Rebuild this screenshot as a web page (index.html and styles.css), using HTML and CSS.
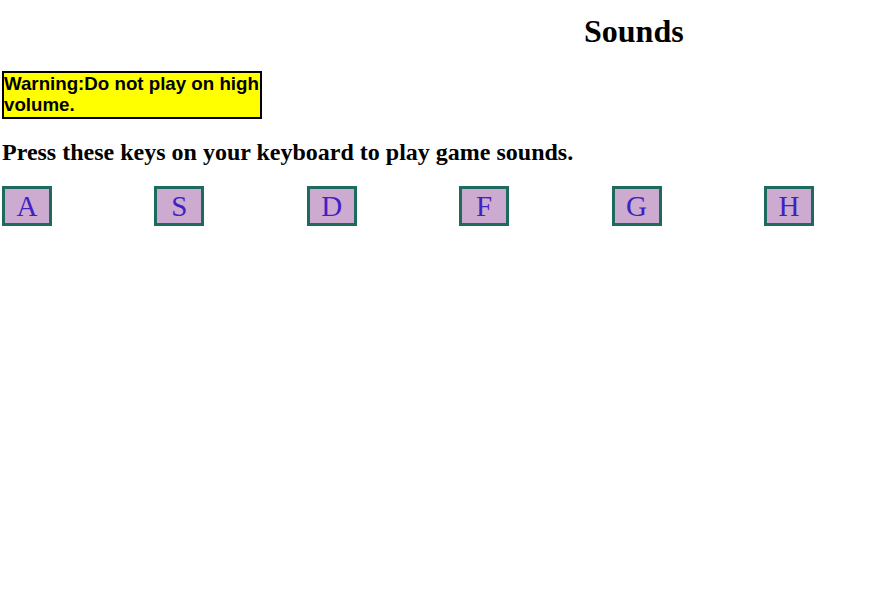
FILE: index.html
```html
<!DOCTYPE html>
<html>
<head>
<meta charset="utf-8">
<link rel="stylesheet" href="styles.css">
</head>
<body>
<h1 class="title">Sounds</h1>
<div class="warning">Warning:Do not play on high volume.</div>
<h2 class="intro">Press these keys on your keyboard to play game sounds.</h2>
<div class="keys">
  <div class="slot"><div class="key">A</div></div>
  <div class="slot"><div class="key">S</div></div>
  <div class="slot"><div class="key">D</div></div>
  <div class="slot"><div class="key">F</div></div>
  <div class="slot"><div class="key">G</div></div>
  <div class="slot"><div class="key">H</div></div>
</div>
</body>
</html>
```
FILE: styles.css
```css
html, body {
  margin: 0;
  padding: 0;
  background: #fff;
}
body {
  font-family: "Liberation Serif", "Times New Roman", serif;
  color: #000;
  padding-left: 2px;
}
.title {
  font-size: 32px;
  font-weight: bold;
  margin: 13px 0 0 0;
  padding-left: 582px;
  line-height: 37px;
}
.warning {
  font-family: "Liberation Sans", Arial, sans-serif;
  font-weight: bold;
  font-size: 18.72px;
  line-height: 21px;
  width: 256px;
  padding: 0 0 2px 0;
  border: 2px solid #000;
  background: #ffff00;
  margin-top: 21px;
}
.intro {
  font-size: 24px;
  font-weight: bold;
  margin: 20px 0 0 0;
  line-height: 27px;
}
.keys {
  display: flex;
  margin-top: 20px;
  margin-left: -2px;
}
.slot {
  flex: 0 0 152.4px;
  padding-left: 2px;
  box-sizing: border-box;
}
.key {
  width: 44px;
  height: 34px;
  border: 3px solid #1d6b5c;
  background: #cdaad0;
  color: #3f22c2;
  font-size: 29px;
  line-height: 35px;
  text-align: center;
}
```
